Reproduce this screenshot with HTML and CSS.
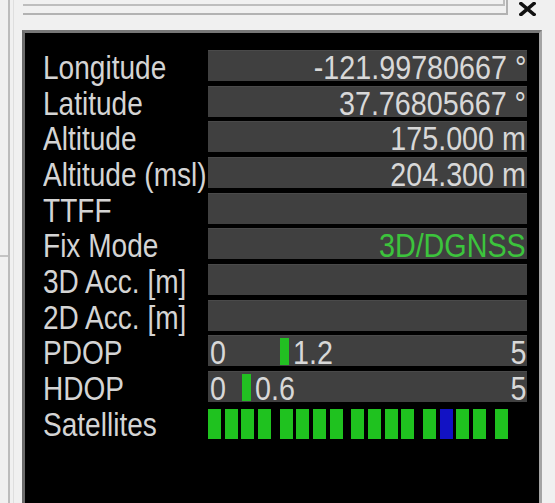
FILE: index.html
```html
<!DOCTYPE html>
<html>
<head>
<meta charset="utf-8">
<link rel="stylesheet" href="styles.css">
</head>
<body>
<div class="edge"><div class="edge-tick"></div></div>
<div class="main">
  <div class="inner">
    <div class="top">
      <div class="topbox"><div class="topbox-inner"></div></div>
      <svg class="close" width="17" height="14" viewBox="0 0 17 14">
        <path d="M2 1.5 L15 12.5 M15 1.5 L2 12.5" stroke="#111" stroke-width="3.6" stroke-linecap="square" fill="none"/>
      </svg>
    </div>
    <div class="panel">
      <div class="grid">
        <div class="label"><span>Longitude</span></div>
        <div class="box val"><span>-121.99780667 °</span></div>

        <div class="label"><span>Latitude</span></div>
        <div class="box val"><span>37.76805667 °</span></div>

        <div class="label"><span>Altitude</span></div>
        <div class="box val"><span>175.000 m</span></div>

        <div class="label"><span>Altitude (msl)</span></div>
        <div class="box val"><span>204.300 m</span></div>

        <div class="label"><span>TTFF</span></div>
        <div class="box val"></div>

        <div class="label"><span>Fix Mode</span></div>
        <div class="box val green"><span>3D/DGNSS</span></div>

        <div class="label"><span>3D Acc. [m]</span></div>
        <div class="box val"></div>

        <div class="label"><span>2D Acc. [m]</span></div>
        <div class="box val"></div>

        <div class="label"><span>PDOP</span></div>
        <div class="box gauge">
          <span class="g-min">0</span>
          <span class="g-max">5</span>
          <div class="g-mark" style="left: 24%"><div class="g-bar"></div><span class="g-text">1.2</span></div>
        </div>

        <div class="label"><span>HDOP</span></div>
        <div class="box gauge">
          <span class="g-min">0</span>
          <span class="g-max">5</span>
          <div class="g-mark" style="left: 12%"><div class="g-bar"></div><span class="g-text">0.6</span></div>
        </div>

        <div class="label"><span>Satellites</span></div>
        <div class="sats">
          <div class="grp"><i class="sat"></i><i class="sat"></i><i class="sat"></i><i class="sat"></i></div>
          <div class="grp"><i class="sat"></i><i class="sat"></i><i class="sat"></i><i class="sat"></i></div>
          <div class="grp"><i class="sat"></i><i class="sat"></i><i class="sat"></i><i class="sat"></i></div>
          <div class="grp"><i class="sat"></i><i class="sat sbas"></i><i class="sat"></i><i class="sat"></i></div>
          <div class="grp"><i class="sat"></i></div>
        </div>
      </div>
    </div>
  </div>
</div>
</body>
</html>
```

FILE: styles.css
```css
html, body {
  margin: 0;
  padding: 0;
}

body {
  width: 555px;
  height: 503px;
  overflow: hidden;
  background: #f0f0f0;
  display: flex;
  font-family: "Liberation Sans", Arial, sans-serif;
}

.edge {
  width: 8px;
  flex: none;
  padding-top: 255px;
}

.edge-tick {
  height: 2px;
  background: #c4c4c4;
}

.main {
  flex: none;
  border-left: 2px solid #bcbcbc;
  height: 503px;
}

.inner {
  margin-left: 3px;
  border-left: 1px solid #dedede;
  padding-left: 8px;
  height: 503px;
}

.top {
  height: 30px;
  display: flex;
  align-items: flex-start;
}

.topbox {
  margin-left: 1px;
  width: 485px;
  height: 15px;
  box-sizing: border-box;
  border-bottom: 2px solid #b2b2b2;
  border-right: 2px solid #b2b2b2;
}

.topbox-inner {
  height: 6px;
  box-sizing: border-box;
  margin-right: 1px;
  border-bottom: 2px solid #bdbdbd;
  border-right: 2px solid #bdbdbd;
}

.close {
  display: block;
  margin-left: 11px;
  margin-top: 2px;
}

.panel {
  width: 520px;
  height: 480px;
  box-sizing: border-box;
  background: #000;
  border-top: 3px solid #777;
  border-left: 3px solid #6c6c6c;
  border-right: 3px solid #a4a4a4;
  padding: 17px 0 0 18px;
}

.grid {
  display: grid;
  grid-template-columns: 165px 319px;
  grid-auto-rows: 31px;
  row-gap: 4.67px;
}

.label {
  color: #d4d4d4;
  font-size: 33px;
  line-height: 35px;
  white-space: nowrap;
}

.label span {
  display: inline-block;
  transform: scaleX(0.85);
  transform-origin: left center;
}

.box {
  background: #404040;
  box-shadow: inset 0 1px 0 #4a4a4a;
  position: relative;
  font-size: 33px;
  line-height: 35px;
  color: #d8d8d8;
  white-space: nowrap;
}

.val {
  text-align: right;
  padding-right: 1px;
}

.val span {
  display: inline-block;
  transform: scaleX(0.87);
  transform-origin: right center;
}

.green {
  color: #3cc43c;
}

.gauge {
  display: flex;
  justify-content: space-between;
  padding: 0 1px 0 2px;
}

.g-min, .g-max, .g-text {
  display: inline-block;
  transform: scaleX(0.87);
}

.g-min {
  transform-origin: left center;
}

.g-max {
  transform-origin: right center;
}

.g-mark {
  position: absolute;
  top: 0;
  margin-left: -4.5px;
  display: flex;
  align-items: flex-start;
}

.g-bar {
  width: 9px;
  height: 27px;
  margin-top: 3px;
  background: #22c022;
}

.g-text {
  margin-left: 4px;
  transform-origin: left center;
}

.sats {
  display: flex;
  gap: 8.67px;
  padding-top: 2px;
}

.grp {
  display: flex;
  gap: 3.67px;
}

.sat {
  display: block;
  width: 13px;
  height: 30px;
  background: #1fc21f;
}

.sat.sbas {
  background: #1212c4;
}
```
